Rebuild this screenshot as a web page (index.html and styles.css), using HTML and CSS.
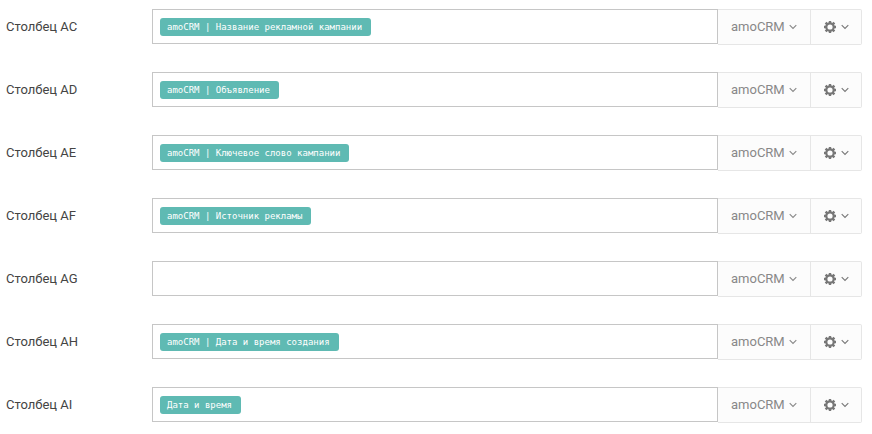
FILE: index.html
```html
<!DOCTYPE html>
<html lang="ru">
<head>
    <meta charset="UTF-8">
    <meta name="viewport" content="width=device-width, initial-scale=1.0">
    <title>Столбцы</title>
    <link rel="stylesheet" href="styles.css">
</head>
<body>
    <!-- Shared icons -->
    <svg class="sprite" aria-hidden="true">
        <symbol id="chevron" viewBox="0 0 8 6">
            <path d="M0.7 1.2 L4 4.5 L7.3 1.2" fill="none" stroke="currentColor" stroke-width="1.1"/>
        </symbol>
        <symbol id="gear" viewBox="0 0 12 12">
            <circle cx="6" cy="6" r="3.7" fill="none" stroke="currentColor" stroke-width="2.2"/>
            <path d="M6 0v2.4M6 9.6V12M0 6h2.4M9.6 6H12M1.6 1.6l1.8 1.8M8.6 8.6l1.8 1.8M1.6 10.4l1.8-1.8M8.6 3.4l1.8-1.8" fill="none" stroke="currentColor" stroke-width="2.4"/>
        </symbol>
    </svg>

    <form class="columns">
        <div class="row">
            <label class="row-label" for="colAC">Столбец AC</label>
            <div class="field">
                <span class="tag">amoCRM | Название рекламной кампании</span>
                <input class="field-input" id="colAC" type="text">
            </div>
            <div class="source">
                <select class="source-select" aria-label="Источник AC"><option>amoCRM</option></select>
                <svg class="chevron"><use href="#chevron"/></svg>
            </div>
            <button class="settings" type="button" aria-label="Настройки AC">
                <svg class="gear"><use href="#gear"/></svg>
                <svg class="chevron"><use href="#chevron"/></svg>
            </button>
        </div>

        <div class="row">
            <label class="row-label" for="colAD">Столбец AD</label>
            <div class="field">
                <span class="tag">amoCRM | Объявление</span>
                <input class="field-input" id="colAD" type="text">
            </div>
            <div class="source">
                <select class="source-select" aria-label="Источник AD"><option>amoCRM</option></select>
                <svg class="chevron"><use href="#chevron"/></svg>
            </div>
            <button class="settings" type="button" aria-label="Настройки AD">
                <svg class="gear"><use href="#gear"/></svg>
                <svg class="chevron"><use href="#chevron"/></svg>
            </button>
        </div>

        <div class="row">
            <label class="row-label" for="colAE">Столбец AE</label>
            <div class="field">
                <span class="tag">amoCRM | Ключевое слово кампании</span>
                <input class="field-input" id="colAE" type="text">
            </div>
            <div class="source">
                <select class="source-select" aria-label="Источник AE"><option>amoCRM</option></select>
                <svg class="chevron"><use href="#chevron"/></svg>
            </div>
            <button class="settings" type="button" aria-label="Настройки AE">
                <svg class="gear"><use href="#gear"/></svg>
                <svg class="chevron"><use href="#chevron"/></svg>
            </button>
        </div>

        <div class="row">
            <label class="row-label" for="colAF">Столбец AF</label>
            <div class="field">
                <span class="tag">amoCRM | Источник рекламы</span>
                <input class="field-input" id="colAF" type="text">
            </div>
            <div class="source">
                <select class="source-select" aria-label="Источник AF"><option>amoCRM</option></select>
                <svg class="chevron"><use href="#chevron"/></svg>
            </div>
            <button class="settings" type="button" aria-label="Настройки AF">
                <svg class="gear"><use href="#gear"/></svg>
                <svg class="chevron"><use href="#chevron"/></svg>
            </button>
        </div>

        <div class="row">
            <label class="row-label" for="colAG">Столбец AG</label>
            <div class="field">
                <input class="field-input" id="colAG" type="text">
            </div>
            <div class="source">
                <select class="source-select" aria-label="Источник AG"><option>amoCRM</option></select>
                <svg class="chevron"><use href="#chevron"/></svg>
            </div>
            <button class="settings" type="button" aria-label="Настройки AG">
                <svg class="gear"><use href="#gear"/></svg>
                <svg class="chevron"><use href="#chevron"/></svg>
            </button>
        </div>

        <div class="row">
            <label class="row-label" for="colAH">Столбец AH</label>
            <div class="field">
                <span class="tag">amoCRM | Дата и время создания</span>
                <input class="field-input" id="colAH" type="text">
            </div>
            <div class="source">
                <select class="source-select" aria-label="Источник AH"><option>amoCRM</option></select>
                <svg class="chevron"><use href="#chevron"/></svg>
            </div>
            <button class="settings" type="button" aria-label="Настройки AH">
                <svg class="gear"><use href="#gear"/></svg>
                <svg class="chevron"><use href="#chevron"/></svg>
            </button>
        </div>

        <div class="row">
            <label class="row-label" for="colAI">Столбец AI</label>
            <div class="field">
                <span class="tag">Дата и время</span>
                <input class="field-input" id="colAI" type="text">
            </div>
            <div class="source">
                <select class="source-select" aria-label="Источник AI"><option>amoCRM</option></select>
                <svg class="chevron"><use href="#chevron"/></svg>
            </div>
            <button class="settings" type="button" aria-label="Настройки AI">
                <svg class="gear"><use href="#gear"/></svg>
                <svg class="chevron"><use href="#chevron"/></svg>
            </button>
        </div>
    </form>
</body>
</html>
```
FILE: styles.css
```css
* {
    box-sizing: border-box;
}

body {
    margin: 0;
    background: #ffffff;
    color: #444444;
    font-family: Roboto, "Liberation Sans", sans-serif;
    font-size: 13px;
}

.sprite {
    display: none;
}

.columns {
    display: flex;
    flex-direction: column;
    gap: 27px;
    padding: 9px 10px 0 6px;
}

.row {
    display: flex;
    height: 36px;
}

.row-label {
    width: 146px;
    line-height: 36px;
}

.field {
    flex: 1;
    display: flex;
    align-items: center;
    min-width: 0;
    height: 35px;
    padding: 0 7px;
    border: 1px solid #c6c6c6;
}

.tag {
    padding: 0 9px 0 7px;
    border-radius: 3px;
    background: #5fbab3;
    color: #ffffff;
    font-family: "DejaVu Sans Mono", monospace;
    font-size: 9px;
    line-height: 18px;
    white-space: nowrap;
}

.field-input {
    flex: 1;
    min-width: 0;
    border: none;
    outline: none;
    background: transparent;
    font: inherit;
}

.source {
    position: relative;
    width: 93px;
    border: 1px solid #e6e6e6;
    border-left: none;
    background: #fcfcfc;
    color: #888888;
}

.source-select {
    width: 100%;
    height: 100%;
    padding: 0 0 2px 13px;
    border: none;
    background: transparent;
    color: inherit;
    font: inherit;
    appearance: none;
    cursor: pointer;
}

.source .chevron {
    position: absolute;
    top: 14px;
    right: 13px;
    pointer-events: none;
}

.settings {
    display: flex;
    align-items: center;
    justify-content: center;
    gap: 5px;
    width: 51px;
    padding: 0;
    border: 1px solid #e6e6e6;
    border-left: none;
    border-radius: 0 2px 2px 0;
    background: #fcfcfc;
    color: #777777;
    cursor: pointer;
}

.chevron {
    width: 8px;
    height: 6px;
}

.gear {
    width: 12px;
    height: 12px;
}
```
